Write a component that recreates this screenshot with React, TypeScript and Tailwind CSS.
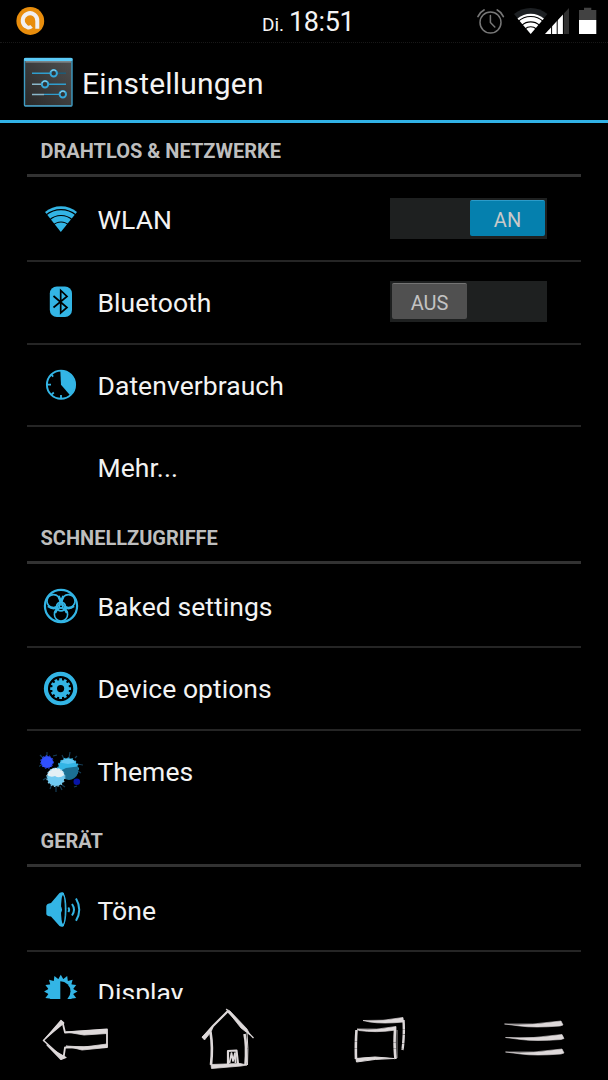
import type { ReactNode } from "react";

const BLUE = "#33b5e5";

function WifiIcon() {
  return (
    <svg width="44" height="44" viewBox="39 197 44 44">
      <path d="M60.8 232 L45 212 A25.5 25.5 0 0 1 77 212 Z" fill={BLUE} />
      <g fill="none" stroke="#000" strokeWidth="1.1">
        <path d="M46 215 A23.5 23.5 0 0 1 76 215" />
        <path d="M49.5 220 A17 17 0 0 1 72.5 220" />
        <path d="M53 225.4 A11 11 0 0 1 69 225.4" />
      </g>
    </svg>
  );
}

function BluetoothIcon() {
  return (
    <svg width="44" height="44" viewBox="39 281 44 44">
      <rect x="49.8" y="286.5" width="22.2" height="30.5" rx="7" fill={BLUE} />
      <path d="M53.5 296 L67 307.5 L60.7 313 V290.5 L67 296.5 L53.5 307.5" fill="none" stroke="#000" strokeWidth="1.7" />
    </svg>
  );
}

function DataIcon() {
  return (
    <svg width="44" height="44" viewBox="39 363 44 44">
      <circle cx="61" cy="384.7" r="14.1" fill="none" stroke={BLUE} strokeWidth="1.9" />
      <path d="M60.3 370.5 A14.5 14.5 0 0 1 70.3 395.5 L61 384.7 Z" fill={BLUE} />
      <path d="M47 384.7 H51 M61 399 V395 M51.2 374.5 L53.2 376.7 M51.2 394.8 L53.8 392.5" stroke={BLUE} strokeWidth="1.8" />
    </svg>
  );
}

function BiohazardIcon() {
  return (
    <svg width="44" height="44" viewBox="39 583 44 44" fill="none" stroke={BLUE}>
      <circle cx="61" cy="606" r="16.1" strokeWidth="2.2" />
      <circle cx="53.6" cy="601.2" r="6.6" strokeWidth="1.6" />
      <circle cx="68.4" cy="601.2" r="6.6" strokeWidth="1.6" />
      <circle cx="61" cy="614.4" r="6.6" strokeWidth="1.6" />
      <path d="M58.5 596 L61 602 L63.5 596 M48 606 Q53.5 610 57.5 606.5 M74 606 Q68.5 610 64.5 606.5 M55 613 Q56 609.5 59 608.5 M67 613 Q66 609.5 63 608.5" strokeWidth="2.6" />
      <circle cx="61" cy="606.5" r="4.4" strokeWidth="1.8" />
      <circle cx="61" cy="606.5" r="1.7" strokeWidth="1.4" />
    </svg>
  );
}

function GearIcon() {
  const teeth = [0, 30, 60, 90, 120, 150];
  return (
    <svg width="44" height="44" viewBox="39 667 44 44" fill="none" stroke={BLUE}>
      <circle cx="60.6" cy="688.6" r="14.7" strokeWidth="4.1" />
      <circle cx="60.6" cy="688.6" r="6.1" strokeWidth="5" />
      {teeth.map((a) => (
        <path key={a} d="M60.6 678.2 V681.5 M60.6 695.7 V699" strokeWidth="2.8" transform={`rotate(${a} 60.6 688.6)`} />
      ))}
    </svg>
  );
}

function ThemesIcon() {
  return (
    <svg width="44" height="44" viewBox="39 750 44 44">
      <path d="M40 755 L43 758 M47 752 V756 M53 756 L57 755 M38 767 L43 764 M62 755 L64 759 M70 752 L69 758 M75 758 L77 756 M77 764 L83 765 M76 770 L81 773 M43 780 L48 777 M50 789 L52 784 M56 792 L56 786 M62 785 L65 787 M60 786 L62 790 M77 786 L74 787" stroke="#153c55" strokeWidth="1.2" />
      <circle cx="47" cy="762" r="6.1" fill="#304ffe" />
      <circle cx="47" cy="762" r="6.4" fill="none" stroke="#304ffe" strokeWidth="1" strokeDasharray="1.5 2" />
      <circle cx="68" cy="768.2" r="9.8" fill={BLUE} />
      <path d="M60 762.5 A9.8 9.8 0 0 1 76 762.5 L68 764 Z" fill="#62c8f3" />
      <circle cx="68" cy="768.2" r="10.1" fill="none" stroke={BLUE} strokeWidth="1.4" strokeDasharray="1.7 2.2" />
      <path d="M60 771 L66 768 L77.5 766.5 A9.5 9.5 0 0 1 62 777 Z" fill="#1b7094" />
      <circle cx="55.8" cy="777.3" r="8.7" fill="#70caf2" />
      <path d="M47.2 775 A8.8 8.8 0 0 1 64.5 775 Q59 779 55 776 Q51 778 47.2 775" fill="#e3eff5" />
      <circle cx="55.8" cy="777.3" r="9" fill="none" stroke="#85d2f3" strokeWidth="1.2" strokeDasharray="1.6 2" />
      <circle cx="76.8" cy="781.7" r="3.3" fill="#0714a8" />
    </svg>
  );
}

function SoundIcon() {
  return (
    <svg width="44" height="44" viewBox="39 887 44 44">
      <path d="M46.3 906 Q46.6 903.5 51 903 L59.5 893 Q62 891.5 64 893 V926 Q62 927.5 59.5 926 L51 916.5 Q46.6 916 46.3 914 Z" fill={BLUE} />
      <ellipse cx="62.3" cy="909.5" rx="3.7" ry="16.5" fill={BLUE} stroke={BLUE} strokeWidth="1" />
      <ellipse cx="62.9" cy="909.5" rx="1.9" ry="14.3" fill="#000" />
      <path d="M60 905 Q64 909.5 60 914 Z" fill={BLUE} />
      <path d="M68.3 907.5 Q70 909.7 68.3 912 M72 904 Q76 909.7 72 915.5 M76 898.5 Q82.5 909.7 76 920.8" fill="none" stroke={BLUE} strokeWidth="2" />
    </svg>
  );
}

function DisplayIcon() {
  const rays = Array.from({ length: 16 }, (_, i) => i * 22.5);
  return (
    <svg width="44" height="44" viewBox="39 971 44 44">
      {rays.map((a) => (
        <path key={a} d="M57.8 980 L60.8 974.8 L63.8 980 Z" fill={BLUE} transform={`rotate(${a} 60.8 991.5)`} />
      ))}
      <circle cx="60.8" cy="991.5" r="12.6" fill={BLUE} />
      <path d="M60.3 981.3 A10.2 10.2 0 0 1 60.3 1001.7 Z" fill="#000" />
    </svg>
  );
}

function SettingsLogo() {
  return (
    <svg width="50" height="50" viewBox="23 57 50 50">
      <defs>
        <linearGradient id="panel" x1="0" y1="1" x2="1" y2="0">
          <stop offset="0" stopColor="#292929" />
          <stop offset="1" stopColor="#505050" />
        </linearGradient>
      </defs>
      <rect x="24.5" y="58.5" width="47.5" height="47.5" rx="1" fill="url(#panel)" stroke="#3d9cc4" strokeWidth="1.4" />
      <rect x="24" y="58" width="48.5" height="3" rx="1" fill="#5ccbf8" />
      <path d="M25.5 61.8 H71" stroke="#8b989d" strokeWidth="1.3" />
      <path d="M25 105.6 H72" stroke="#4a91b0" strokeWidth="1.3" />
      <path d="M32 73.2 H50 M48 84.2 H66 M44 94.4 H60" stroke="#2f9dcd" strokeWidth="1.4" />
      <path d="M57 73.2 H66" stroke="#1b5e7c" strokeWidth="1.4" />
      <path d="M32 84.2 H41 M32 94.4 H44" stroke="#8ab7ca" strokeWidth="1.5" />
      <g fill="#333" stroke="#36a8da" strokeWidth="2">
        <circle cx="53.7" cy="73.2" r="3.2" />
        <circle cx="45" cy="84.2" r="3.2" />
        <circle cx="62.8" cy="94.2" r="3.2" />
      </g>
      <path d="M50.8 71.5 A3.3 3.3 0 0 1 56 71 M42 83 A3.3 3.3 0 0 1 47.4 82 M60 93 A3.3 3.3 0 0 1 65 92" fill="none" stroke="#9ed0e2" strokeWidth="1" />
    </svg>
  );
}

function StatusBar() {
  return (
    <header className="flex h-[43px] shrink-0 items-start justify-between border-b border-dotted border-[#181818]">
      <svg width="138" height="42" viewBox="0 0 138 42">
        <circle cx="30.3" cy="21" r="13.9" fill="#e88d0c" />
        <path d="M25.6 26.3 A7.3 7.3 0 1 1 37.3 21.2 V28.8" fill="none" stroke="#f1eff0" strokeWidth="4" />
        <path d="M24.5 25 Q28 29.4 31.6 26.4" fill="none" stroke="#f1eff0" strokeWidth="3.8" />
      </svg>
      <div className="flex items-baseline whitespace-nowrap pl-2 pt-[5px] leading-[34px] text-[#f4f4f4]">
        <span className="w-[27px] text-[19px]">Di.</span>
        <span className="w-[65px] text-[27px] tracking-[-0.4px]">18:51</span>
      </div>
      <svg width="138" height="42" viewBox="470 0 138 42">
        <g fill="none" stroke="#777" strokeWidth="1.5" strokeLinecap="round">
          <circle cx="490.5" cy="22.5" r="10.5" />
          <path d="M490.4 15.5 V22.5 L494.8 27" />
          <path d="M478 16.5 Q480 12 484 10 M497.3 10 Q501.3 12 503.3 16.5" strokeWidth="1.8" />
        </g>
        <path d="M530.7 34 L514 14 A26 26 0 0 1 547.4 14 Z" fill="#1d2023" />
        <path d="M530.7 34 L517.5 18.5 A21 21 0 0 1 543.9 18.5 Z" fill="#fff" />
        <g fill="none" stroke="#000" strokeWidth="1.1">
          <path d="M518 21.5 A18.5 18.5 0 0 1 543.4 21.5" />
          <path d="M522 25.2 A13 13 0 0 1 539.4 25.2" />
          <path d="M525 29 A8.5 8.5 0 0 1 536.4 29" />
        </g>
        <path d="M545 34 L569 8 V34 Z" fill="#303030" />
        <path d="M545 34 L563 14.5 V34 Z" fill="#fff" />
        <path d="M551.6 24 V34 M557.2 18 V34 M563.4 12 V34" stroke="#000" strokeWidth="1" />
        <path d="M579 20 V10 H584 V7.7 H591.3 V10 H596.3 V20 Z" fill="#424242" />
        <rect x="579" y="20" width="17.3" height="14" fill="#fff" />
      </svg>
    </header>
  );
}

function Section({ title, className = "h-[54px] pt-1" }: { title: string; className?: string }) {
  return (
    <h2 className={`${className} flex shrink-0 items-center border-b-[3px] border-[#323232] pl-[13.5px] text-[20px] font-bold text-[#bebebe]`}>
      {title}
    </h2>
  );
}

type RowProps = { label: string; icon?: ReactNode; toggle?: ReactNode; className: string; labelPad?: string };

function Row({ label, icon, toggle, className, labelPad = "pt-[3px]" }: RowProps) {
  return (
    <div className={`${className} flex shrink-0 items-center border-b-2 pl-3`}>
      <div className="flex h-11 w-[58.5px] shrink-0">{icon}</div>
      <span className={`${labelPad} grow text-[26.5px] leading-8 tracking-[0.05px] text-[#f3f3f3]`}>{label}</span>
      {toggle}
    </div>
  );
}

function Toggle({ on }: { on: boolean }) {
  return (
    <div className={`mr-[34px] flex h-[41px] w-[157px] bg-[#1e2020] p-0.5 ${on ? "justify-end" : "mb-0.5 justify-start"}`}>
      <div
        className={`flex h-9 w-[75px] items-center justify-center rounded-xs border-t pt-[3px] text-[20px] ${
          on ? "border-[#2b9bc9] bg-[#0580ae] text-[#c9c9c9]" : "border-[#747474] bg-[#505050] text-[#c3c3c3]"
        }`}
      >
        {on ? "AN" : "AUS"}
      </div>
    </div>
  );
}

function NavBar() {
  return (
    <nav className="h-[81px] shrink-0">
      <svg width="608" height="81" viewBox="0 999 608 81" fill="none" stroke="#ded9da" strokeLinejoin="round">
        <path d="M62 1021 L43.5 1040.5 L63 1058" strokeWidth="1.6" />
        <path d="M61 1020.5 L63.8 1023 L53 1032 L46 1038 Z M47 1045 L53 1050 L66 1057.5 L61 1059.5 Z" fill="#ded9da" strokeWidth="1.2" />
        <path d="M62.5 1022 L65 1032.5 L107 1029.5 V1047 L65 1047.5 L63.5 1058" strokeWidth="1.8" />
        <path d="M66 1032 L106 1029.5 L107 1033.5 L84 1035 Z M66 1046 L84 1047 L107 1044 V1047.5 L82 1050 Z" fill="#ded9da" strokeWidth=".8" />

        <path d="M202.5 1038 L213 1026 L228 1011" strokeWidth="2.2" />
        <path d="M202 1037 L213 1027 L211 1032 L204.5 1040 Z M226 1009 L230 1011 L247 1029 L250 1035 L241 1028 Z" fill="#ded9da" strokeWidth=".8" />
        <path d="M228 1012 L253.5 1038" strokeWidth="1.2" />
        <path d="M210.5 1032 Q213 1047 211 1065 M244.5 1034 Q247 1045 245.5 1065" strokeWidth="2.6" />
        <path d="M247 1033 Q248.5 1048 247.5 1065" strokeWidth="1" />
        <path d="M211 1064.5 L240 1063.5 L247 1065 L241 1066 L211.5 1068.5 Z" fill="#ded9da" strokeWidth=".8" />
        <path d="M228 1064 V1051 L236.5 1050.5 L238 1064" strokeWidth="2.2" />
        <path d="M229.5 1063 L231.5 1053 L233 1061 L235 1053 L235.5 1063" strokeWidth="1.7" />

        <path d="M363 1020.5 Q383 1021.5 403 1017.5 L403.5 1022 Q383 1024 370 1022 Z" fill="#ded9da" strokeWidth=".7" />
        <path d="M403.5 1020 Q404.5 1034 402.5 1050" strokeWidth="2.4" strokeDasharray="9 .3 5 .3" />
        <path d="M357 1029 Q377 1030.5 396 1026.5 V1030 Q376 1033 359 1030.5 Z" fill="#ded9da" strokeWidth=".7" />
        <path d="M356.5 1030 Q355.5 1044 356 1059 M395 1030 Q394 1045 395.5 1059" strokeWidth="2.6" strokeDasharray="12 .3 6 .3" />
        <path d="M397 1030 V1058" strokeWidth=".7" />
        <path d="M356 1058.5 Q375 1055.5 394 1058.5 Q376 1058.5 356.5 1062 Z" fill="#ded9da" strokeWidth="1" />

        {[1023, 1036.5, 1051].map((y, i) => (
          <path
            key={y}
            transform={`translate(${i ? 1 : 0} ${y})`}
            d="M504.5 1 Q533 2.5 561 -2 L563 2 L560 3 Q534 5 520 3 Z"
            fill="#ded9da"
            strokeWidth=".6"
          />
        ))}
      </svg>
    </nav>
  );
}

export default function App() {
  return (
    <div className="flex h-[1080px] w-[608px] flex-col overflow-hidden bg-black font-['Roboto',sans-serif]">
      <StatusBar />
      <div className="flex h-20 shrink-0 items-center border-b-[3px] border-[#31b2e7] pl-[23px] pt-px">
        <SettingsLogo />
        <h1 className="pl-[9px] pt-0.5 text-[30px] tracking-[0.2px] text-[#f3f3f3]">Einstellungen</h1>
      </div>
      <main className="flex h-[876px] shrink-0 flex-col overflow-hidden px-[27px]">
        <Section title="DRAHTLOS & NETZWERKE" className="h-[54px] pt-[5px]" />
        <Row label="WLAN" icon={<WifiIcon />} toggle={<Toggle on />} className="h-[85px] border-[#252525]" labelPad="pt-[3px]" />
        <Row label="Bluetooth" icon={<BluetoothIcon />} toggle={<Toggle on={false} />} className="h-[83px] border-[#252525]" labelPad="pt-px" />
        <Row label="Datenverbrauch" icon={<DataIcon />} className="h-[82px] border-[#252525]" labelPad="pt-px" />
        <Row label="Mehr..." className="h-[83px] border-transparent" labelPad="pt-px" />
        <Section title="SCHNELLZUGRIFFE" />
        <Row label="Baked settings" icon={<BiohazardIcon />} className="h-[84px] border-[#252525]" />
        <Row label="Device options" icon={<GearIcon />} className="h-[83px] border-[#252525]" labelPad="pt-px" />
        <Row label="Themes" icon={<ThemesIcon />} className="h-[83px] border-transparent" labelPad="pt-px" />
        <Section title="GERÄT" className="h-[53px] pt-1" />
        <Row label="Töne" icon={<SoundIcon />} className="h-[85px] border-[#252525]" labelPad="pt-[5px]" />
        <Row label="Display" icon={<DisplayIcon />} className="h-[83px] border-transparent" labelPad="pt-px" />
      </main>
      <NavBar />
    </div>
  );
}
